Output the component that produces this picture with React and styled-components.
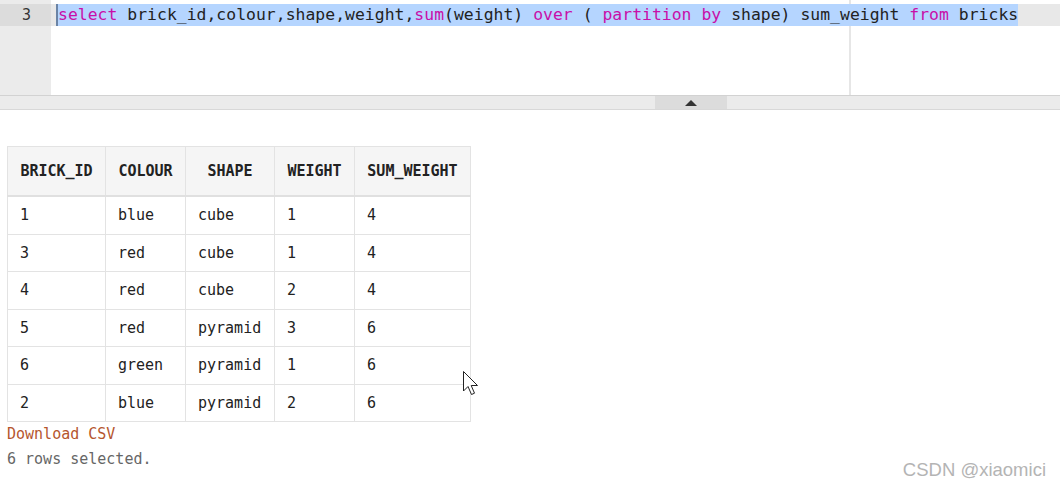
import React from 'react';
import styled, { createGlobalStyle } from 'styled-components';

const Global = createGlobalStyle`
  html, body { margin: 0; padding: 0; background: #fff; }
  body { width: 1060px; height: 488px; overflow: hidden; position: relative; }
`;

const mono = `"DejaVu Sans Mono", "Liberation Mono", monospace`;

const Page = styled.div`
  display: flex;
  flex-direction: column;
  height: 488px;
  position: relative;
`;

const Editor = styled.div`
  display: flex;
  height: 95px;
  background: #fff;
`;

const Gutter = styled.div`
  width: 51px;
  background: #ebebeb;
  padding-top: 4px;
  box-sizing: border-box;
`;

const LineNo = styled.div`
  height: 22px;
  line-height: 22px;
  background: ${p => (p.active ? '#dcdcdc' : 'transparent')};
  text-align: right;
  padding-right: 20px;
  font-family: ${mono};
  font-size: 15px;
  color: #333;
`;

const Code = styled.div`
  flex: 1;
  padding-top: 4px;
  background: linear-gradient(to right, transparent 798px, #e6e6e6 798px, #e6e6e6 800px, transparent 800px);
`;

const CodeLine = styled.div`
  height: 22px;
  line-height: 22px;
  background: ${p => (p.active ? '#e8e8e8' : 'transparent')};
  padding-left: 5px;
  font-family: ${mono};
  font-size: 16.4px;
  letter-spacing: 0.03px;
  color: #222;
  white-space: pre;
`;

const Selection = styled.span`
  display: inline-block;
  height: 22px;
  background: #b5d5ff;
  border-left: 2px solid #6b84a6;
`;

const Kw = styled.span`
  color: #c80fa8;
`;

const Splitter = styled.div`
  height: 13px;
  background: #ebebeb;
  border-top: 1px solid #d2d2d2;
  border-bottom: 1px solid #d8d8d8;
  display: flex;
  padding-left: 655px;
`;

const Handle = styled.div`
  width: 72px;
  background: #dcdcdc;
  display: flex;
  align-items: center;
  justify-content: center;
`;

const Arrow = styled.div`
  width: 0;
  height: 0;
  border-left: 6px solid transparent;
  border-right: 6px solid transparent;
  border-bottom: 6px solid #333;
`;

const Results = styled.div`
  padding: 36px 0 0 7px;
  font-family: ${mono};
  font-size: 15px;
  color: #222;
`;

const Table = styled.table`
  border-collapse: collapse;
  border: 1px solid #e0e0e0;
  table-layout: fixed;
  width: 463px;
`;

const Th = styled.th`
  height: 48px;
  padding: 0;
  background: #f5f5f5;
  border: 1px solid #e3e3e3;
  border-bottom: 2px solid #e0e0e0;
  font-weight: bold;
  text-align: center;
  white-space: nowrap;
`;

const Td = styled.td`
  height: 36.5px;
  padding: 0 0 0 12px;
  border: 1px solid #e3e3e3;
  text-align: left;
  white-space: nowrap;
  font-weight: normal;
`;

const Download = styled.a`
  display: block;
  color: #b5562e;
  line-height: 24px;
  text-decoration: none;
`;

const Status = styled.div`
  color: #666;
  line-height: 26px;
`;

const Watermark = styled.div`
  position: absolute;
  right: 14px;
  bottom: 7px;
  font-family: "Liberation Sans", Arial, sans-serif;
  font-size: 18.5px;
  color: #b4b4b4;
`;

const Pointer = styled.svg`
  position: absolute;
  left: 462px;
  top: 370px;
`;

const cols = [
  ['BRICK_ID', 98],
  ['COLOUR', 80],
  ['SHAPE', 89],
  ['WEIGHT', 80],
  ['SUM_WEIGHT', 116],
];
const rows = [
  ['1', 'blue', 'cube', '1', '4'],
  ['3', 'red', 'cube', '1', '4'],
  ['4', 'red', 'cube', '2', '4'],
  ['5', 'red', 'pyramid', '3', '6'],
  ['6', 'green', 'pyramid', '1', '6'],
  ['2', 'blue', 'pyramid', '2', '6'],
];

export default function App() {
  return (
    <Page>
      <Global />
      <Editor>
        <Gutter>
          <LineNo active>3</LineNo>
        </Gutter>
        <Code>
          <CodeLine active>
            <Selection>
              <Kw>select</Kw> brick_id,colour,shape,weight,<Kw>sum</Kw>(weight) <Kw>over</Kw> ( <Kw>partition</Kw> <Kw>by</Kw> shape) sum_weight <Kw>from</Kw> bricks
            </Selection>
          </CodeLine>
        </Code>
      </Editor>
      <Splitter>
        <Handle>
          <Arrow />
        </Handle>
      </Splitter>
      <Results>
        <Table>
          <colgroup>
            {cols.map(([c, w]) => (
              <col key={c} style={{ width: w }} />
            ))}
          </colgroup>
          <thead>
            <tr>
              {cols.map(([c]) => (
                <Th key={c}>{c}</Th>
              ))}
            </tr>
          </thead>
          <tbody>
            {rows.map((r, i) => (
              <tr key={i}>
                {r.map((v, j) => (
                  <Td key={j}>{v}</Td>
                ))}
              </tr>
            ))}
          </tbody>
        </Table>
        <Download href="#">Download CSV</Download>
        <Status>6 rows selected.</Status>
      </Results>
      <Pointer width="20" height="28" viewBox="0 0 20 28">
        <path d="M1.5 1.5 L1.5 21 L6 16.5 L9.5 24.5 L12.5 23.2 L9.2 15.5 L15.5 15.5 Z" fill="#fff" stroke="#222" strokeWidth="1" strokeLinejoin="miter" />
      </Pointer>
      <Watermark>CSDN @xiaomici</Watermark>
    </Page>
  );
}
